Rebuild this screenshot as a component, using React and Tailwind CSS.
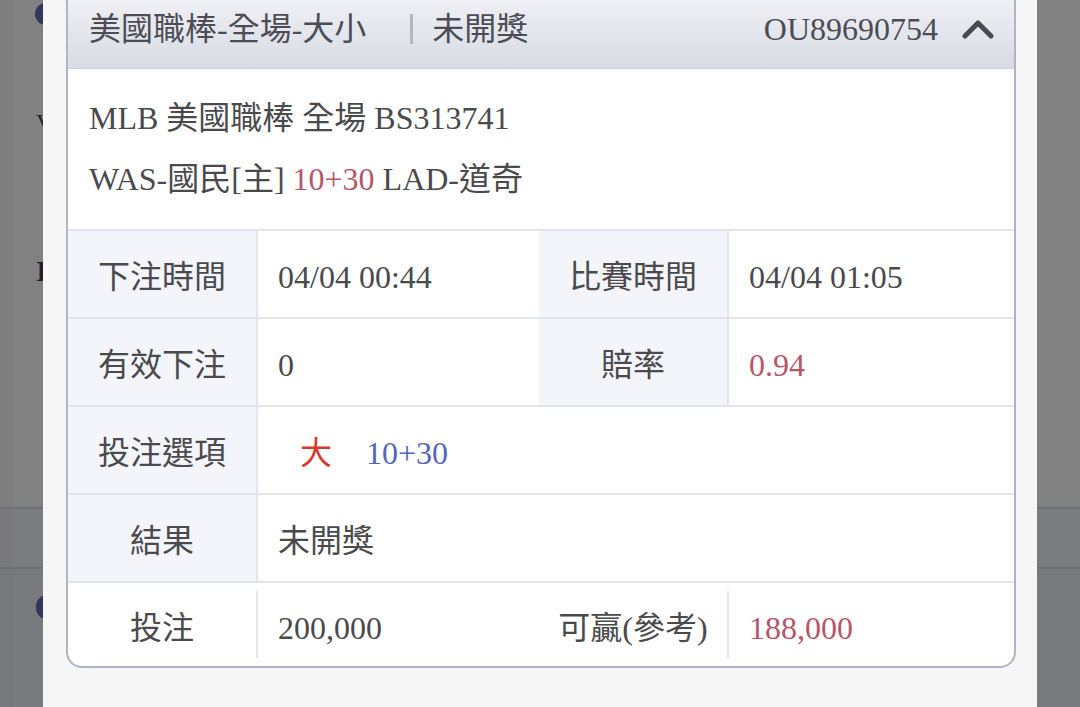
import React from "react";

const FONT = { fontFamily: '"Liberation Serif", "Noto Sans CJK TC", serif' };

function Chevron() {
  return (
    <svg width="32" height="20" viewBox="0 0 32 20" className="ml-[24px]">
      <polyline points="3,17 16,4 29,17" fill="none" stroke="#4a4a55" strokeWidth="5" strokeLinecap="round" strokeLinejoin="round" />
    </svg>
  );
}

function Label({ children, bg = true }) {
  return (
    <div className={`w-[188px] shrink-0 flex items-center justify-center pt-[6px] ${bg ? "bg-[#f4f5fa]" : ""}`}>
      {children}
    </div>
  );
}

function Row({ children, last = false }) {
  return (
    <div className={`flex h-[88px] ${last ? "" : "border-b-2 border-[#e3e4ec]"}`}>{children}</div>
  );
}

const V = "border-l-2 border-[#e3e4ec] flex items-center pl-[20px] pt-[6px]";

export default function App() {
  return (
    <div className="relative w-[1080px] h-[707px] overflow-hidden bg-[#808080] text-[#4a4a4d]" style={FONT}>
      {/* dimmed page underneath */}
      <div className="flex flex-col h-full">
        <div className="h-[507px] flex">
          <div className="w-[13px] bg-[#7e7e7e]" />
          <div className="flex-1 bg-[#818181]" />
        </div>
        <div className="h-[2px] bg-[#707174]" />
        <div className="h-[58px] flex">
          <div className="w-[13px] bg-[#79797c]" />
          <div className="flex-1 bg-[#7b7c80]" />
        </div>
        <div className="h-[2px] bg-[#6e6f73]" />
        <div className="flex-1 flex">
          <div className="w-[13px] bg-[#77787b]" />
          <div className="flex-1 bg-[#797a7e]" />
        </div>
      </div>
      <div className="absolute left-[35px] top-[3px] w-[22px] h-[22px] rounded-full bg-[#34365a]" />
      <div className="absolute left-[36px] top-[110px] text-[#1e2030] text-[24px] leading-none">V</div>
      <div className="absolute left-[36px] top-[256px] text-[#1e2030] text-[30px] leading-none font-bold">I</div>
      <div className="absolute left-[36px] top-[595px] w-[22px] h-[24px] rounded-full bg-[#34365a]" />

      {/* modal */}
      <div className="absolute left-[43px] top-0 w-[994px] h-[707px] bg-[#f6f6f7] pl-[23px] pr-[21px]">
        <div className="border-x-2 border-b-2 border-[#b2b4c6] rounded-b-[16px] bg-white overflow-hidden">
          {/* header */}
          <div className="h-[69px] flex items-center pl-[21px] pr-[20px] pb-[11px] bg-gradient-to-b from-[#eef0f4] to-[#d9dbe5] border-b border-[#cfd1dc] text-[32px] text-[#4c4c56]">
            <span>美國職棒-全場-大小</span>
            <span className="w-[3px] h-[30px] bg-[#b4b6c0] ml-[44px] mr-[19px]" />
            <span>未開獎</span>
            <span className="ml-auto">OU89690754</span>
            <Chevron />
          </div>
          {/* info */}
          <div className="pt-[19px] pb-[19px] pl-[21px] text-[32px] leading-[61px] text-[#4a4a4d] border-b-2 border-[#e3e4ec]">
            <div>MLB 美國職棒 全場 BS313741</div>
            <div>
              WAS-國民[主] <span className="text-[#b5566a]">10+30</span> LAD-道奇
            </div>
          </div>
          {/* table */}
          <div className="text-[32px] text-[#4a4a4d]">
            <Row>
              <Label>下注時間</Label>
              <div className={`w-[283px] shrink-0 ${V}`}>04/04 00:44</div>
              <Label>比賽時間</Label>
              <div className={`flex-1 ${V}`}>04/04 01:05</div>
            </Row>
            <Row>
              <Label>有效下注</Label>
              <div className={`w-[283px] shrink-0 ${V}`}>0</div>
              <Label>賠率</Label>
              <div className={`flex-1 ${V} text-[#b5566a]`}>0.94</div>
            </Row>
            <Row>
              <Label>投注選項</Label>
              <div className="flex-1 border-l-2 border-[#e3e4ec] flex items-center pl-[42px] pt-[6px]">
                <span className="text-[#d63a2e]">大</span>
                <span className="ml-[34px] text-[#5565b8]">10+30</span>
              </div>
            </Row>
            <Row>
              <Label>結果</Label>
              <div className={`flex-1 ${V}`}>未開獎</div>
            </Row>
            <div className="flex h-[83px] py-[8px]">
              <Label bg={false}>投注</Label>
              <div className={`w-[283px] shrink-0 ${V}`}>200,000</div>
              <Label bg={false}>可贏(參考)</Label>
              <div className={`flex-1 ${V} text-[#b5566a]`}>188,000</div>
            </div>
          </div>
        </div>
      </div>
    </div>
  );
}
